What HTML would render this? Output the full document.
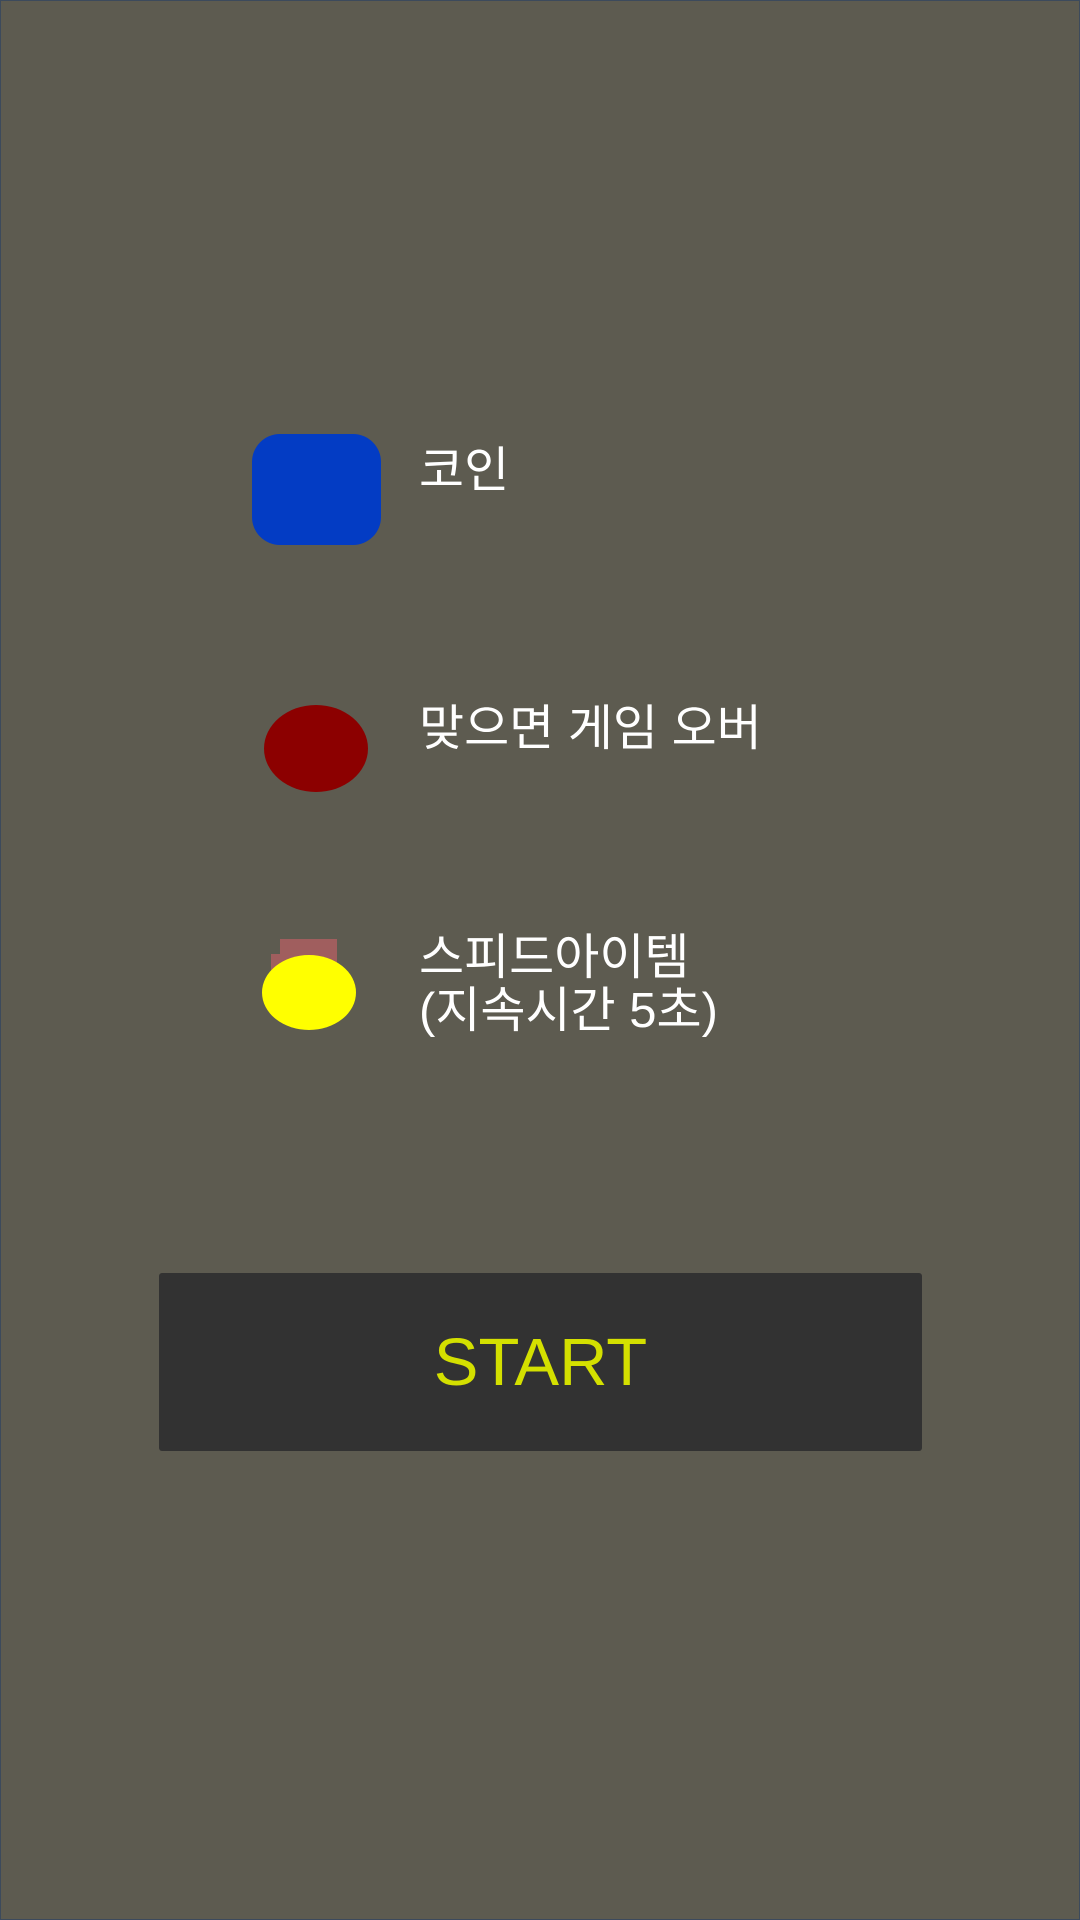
<!DOCTYPE html>
<html><head><meta charset="utf-8"><style>
html,body{margin:0;padding:0;}
body{width:1080px;height:1920px;background:#5d5b50;position:relative;overflow:hidden;box-sizing:border-box;border:1px solid #3c4a5c;}
.t{position:absolute;left:418px;color:#fff;font-family:"Liberation Sans","Noto Sans CJK KR","NanumGothic",sans-serif;font-size:49px;line-height:53px;white-space:nowrap;}
</style></head><body>
<div style="position:absolute;left:251px;top:433px;width:129px;height:111px;background:#033cc4;border-radius:28px;"></div>
<div class="t" style="top:444px;">코인</div>
<div style="position:absolute;left:263px;top:704px;width:104px;height:87px;background:#8c0000;border-radius:50%;"></div>
<div class="t" style="top:702px;">맞으면 게임 오버</div>
<div style="position:absolute;left:279px;top:938px;width:57px;height:30px;background:#a05e5e;"></div>
<div style="position:absolute;left:270px;top:953px;width:20px;height:20px;background:#a05e5e;"></div>
<div style="position:absolute;left:261px;top:954px;width:94px;height:75px;background:#ffff00;border-radius:50%;"></div>
<div class="t" style="top:931px;">스피드아이템<br>(지속시간 5초)</div>
<div style="position:absolute;left:158px;top:1272px;width:763px;height:178px;background:#323232;border-radius:3px;display:flex;align-items:center;justify-content:center;color:#d4e000;font-family:'Liberation Sans',sans-serif;font-size:67px;">START</div>
</body></html>
